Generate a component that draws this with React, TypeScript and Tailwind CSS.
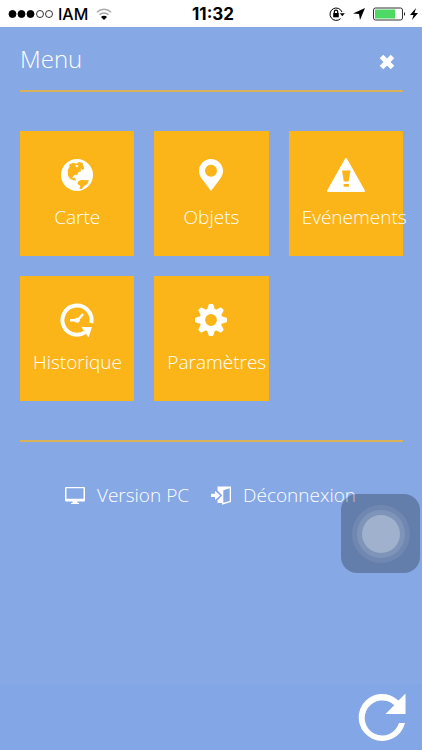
import { ReactNode } from "react";

interface Tile {
  label: string;
  icon: ReactNode;
}

const GlobeIcon = () => (
  <svg viewBox="0 0 96 96" className="size-8">
    <circle cx="48" cy="48" r="48" fill="#fff" />
    <g fill="#fbb518">
      <path d="M20 34 L26 22 L24 17 L36 11 L46 14 L54 9 L66 12 L65 18 L70 28 L66 33 L58 28 L61 36 L52 40 L49 48 L42 47 L38 50 L33 58 L41 56 L46 65 L38 64 L28 60 L21 50 Z" />
      <path d="M50 68 L60 63 L84 64 L78 76 L70 80 L62 90 L55 89 L58 81 L50 75 Z" />
    </g>
    <path d="M44 17 L53 20 L49 25 L43 22 Z" fill="#fff" />
  </svg>
);

const PinIcon = () => (
  <svg viewBox="0 0 24 32" className="h-8 w-6">
    <path
      fill="#fff"
      fillRule="evenodd"
      d="M12 0C5.4 0 0 5.2 0 11.8c0 3 1.2 5.6 2.8 8L12 32l9.200-12.200c1.600-2.400 2.800-5 2.800-8C24 5.200 18.600 0 12 0zm0 5.800a6 6 0 1 1 0 12 6 6 0 0 1 0-12z"
    />
  </svg>
);

const WarningIcon = () => (
  <svg viewBox="0 0 40 34" className="h-[34px] w-10">
    <path d="M20 1 L38 33 H2 Z" fill="#fff" stroke="#fff" strokeWidth="2" strokeLinejoin="round" />
    <path d="M16 12.500h8.500l-1.800 10.500q-2.500 1.500-5 0z" fill="#fbb518" />
    <rect x="17.500" y="26" width="5.500" height="2.800" rx="0.800" fill="#fbb518" />
  </svg>
);

const HistoryIcon = () => (
  <svg viewBox="0 0 34 34" className="size-[34px]">
    <path d="M31.300 20A14.600 14.600 0 1 0 25 29.300" fill="none" stroke="#fff" strokeWidth="4" />
    <path d="M21.500 24 L32 24 L28.500 34.500 Z" fill="#fff" />
    <path d="M10 17.300h7.500l5.500-6.300" fill="none" stroke="#fff" strokeWidth="2.500" />
    <circle cx="17.200" cy="17.300" r="2.500" fill="#fff" />
  </svg>
);

const GearIcon = () => (
  <svg viewBox="-16 -16 32 32" className="size-8">
    <circle r="8.700" fill="none" stroke="#fff" strokeWidth="5.600" />
    {[0, 45, 90, 135, 180, 225, 270, 315].map((angle) => (
      <path
        key={angle}
        d="M-3.800-10.500 L-2.500-15 Q-2.200-16 -1.300-16 H1.300 Q2.200-16 2.500-15 L3.800-10.500 Z"
        fill="#fff"
        transform={`rotate(${angle})`}
      />
    ))}
  </svg>
);

const ScreenIcon = () => (
  <svg viewBox="0 0 20 17" className="h-[17px] w-5" fill="#fff">
    <path
      fillRule="evenodd"
      d="M1 0h18a1 1 0 0 1 1 1v12.500a1 1 0 0 1-1 1h-6.500V16H14v1H6v-1h1.500v-1.500H1a1 1 0 0 1-1-1V1a1 1 0 0 1 1-1zm.500 1.200v10.500h17V1.200z"
    />
  </svg>
);

const LogoutIcon = () => (
  <svg viewBox="0 0 20 19" className="h-[19px] w-5" fill="#fff">
    <path d="M0 7.800h4V4.800L9.200 9.400 4 14v-3H0z" />
    <path d="M6.500 0.500H20V16L11 18.700V17H6.500V14.200L11.300 9.400L6.500 4.600Z" />
    <path d="M12.300 4.300L18.700 2.300V14.900L12.300 16.800Z" fill="#86a8e5" />
  </svg>
);

const CloseIcon = () => (
  <svg viewBox="0 0 16 16" className="size-4">
    <path d="M2.500 2.500 L13.500 13.500 M13.500 2.500 L2.500 13.500" stroke="#fff" strokeWidth="5" />
  </svg>
);

const RefreshIcon = () => (
  <svg viewBox="0 0 48 48" className="size-12">
    <path
      d="M47 30 A23.500 23.500 0 1 1 40.500 7.500 L47.500 0.500 V21 H27.500 L36.200 12.200 A17.500 17.500 0 1 0 41 30 Z"
      fill="#fff"
    />
  </svg>
);

const WifiIcon = () => (
  <svg viewBox="0 0 16 12" className="h-3 w-4" fill="none">
    <path d="M1 4.200a10 10 0 0 1 14 0" stroke="#aaa" strokeWidth="1.500" />
    <path d="M3.400 6.800a6.500 6.500 0 0 1 9.200 0" stroke="#aaa" strokeWidth="1.500" />
    <path d="M8 12 L5 9a4.200 4.200 0 0 1 6 0z" fill="#000" />
  </svg>
);

const LockIcon = () => (
  <svg viewBox="0 0 16 14" className="h-[14px] w-4" fill="none" stroke="#000">
    <path d="M13 5A6.200 6.200 0 1 0 11.500 11.700" />
    <path d="M10.800 6.300h5l-2.500 3z" fill="#000" stroke="none" />
    <rect x="4.200" y="6" width="5.600" height="4.300" fill="#000" stroke="none" />
    <path d="M5.300 6V4.800a1.700 1.700 0 0 1 3.400 0V6" strokeWidth="1.200" />
  </svg>
);

const StatusBar = () => (
  <div className="grid h-[27px] grid-cols-3 items-center bg-white pr-1 pl-2 font-[Inter,sans-serif] text-base text-black">
    <div className="flex items-center">
      <svg viewBox="0 0 46 10" className="mr-1 h-[10px] w-[46px]" stroke="#000">
        <circle cx="4.500" cy="5" r="3.500" />
        <circle cx="13.500" cy="5" r="3.500" />
        <circle cx="22.500" cy="5" r="3.500" />
        <circle cx="32" cy="5" r="3.500" fill="none" strokeWidth="0.800" />
        <circle cx="41" cy="5" r="3.500" fill="none" strokeWidth="0.800" />
      </svg>
      <span className="mr-2 font-medium">IAM</span>
      <WifiIcon />
    </div>
    <span className="pt-px text-center text-[17px] leading-[27px] font-bold">11:32</span>
    <div className="flex items-center justify-end">
      <LockIcon />
      <svg viewBox="0 0 12 12" className="ml-2 size-3">
        <path d="M12 0 L7 12 L6 6 L0 5.500 Z" />
      </svg>
      <svg viewBox="0 0 33 14" className="ml-2 h-[14px] w-[33px]">
        <rect x="0.500" y="1" width="29" height="12" rx="2" fill="#fff" stroke="#333" />
        <rect x="2" y="2.500" width="20" height="9" fill="#4cd964" />
        <path d="M31 5q2 2 0 4z" />
      </svg>
      <svg viewBox="0 0 8 12" className="ml-1 h-3 w-2">
        <path d="M6 0 L0 7 H3.500 L2 12 L8 5 H4.500 Z" />
      </svg>
    </div>
  </div>
);

const tiles: Tile[] = [
  { label: "Carte", icon: <GlobeIcon /> },
  { label: "Objets", icon: <PinIcon /> },
  { label: "Evénements", icon: <WarningIcon /> },
  { label: "Historique", icon: <HistoryIcon /> },
  { label: "Paramètres", icon: <GearIcon /> },
];

const App = () => {
  return (
    <div className="relative flex min-h-screen flex-col bg-[#86a8e5] font-['Open_Sans','Noto_Sans',sans-serif] font-light text-white">
      <StatusBar />
      <main className="grow pr-[19px] pl-5">
        <header className="flex h-[65px] items-center justify-between border-b-2 border-[#d9b25c] pr-2">
          <h1 className="text-2xl">Menu</h1>
          <button type="button" aria-label="Fermer" className="pt-[6px]">
            <CloseIcon />
          </button>
        </header>
        <nav className="grid grid-cols-3 gap-5 border-b-2 border-[#d9b25c] py-[39px]">
          {tiles.map((tile) => (
            <button
              key={tile.label}
              type="button"
              className="flex h-[125px] min-w-0 flex-col bg-[#fbb518] px-[13px] pt-6"
            >
              <span className="flex h-10 w-full items-center justify-center">{tile.icon}</span>
              <span className="mt-2 w-full text-[19px] leading-[28px] whitespace-nowrap">{tile.label}</span>
            </button>
          ))}
        </nav>
        <div className="flex justify-center gap-[22px] pt-10 pr-0.5 text-[19px] leading-[26px]">
          <a href="#pc" className="flex items-center gap-3">
            <ScreenIcon />
            Version PC
          </a>
          <a href="#logout" className="flex items-center gap-3">
            <LogoutIcon />
            Déconnexion
          </a>
        </div>
      </main>
      <footer className="flex h-[66px] items-center justify-end bg-[#82a6e6] pr-4">
        <button type="button" aria-label="Actualiser">
          <RefreshIcon />
        </button>
      </footer>
      {/* floating touch button */}
      <button
        type="button"
        aria-label="AssistiveTouch"
        className="absolute top-[494px] right-[2px] flex size-[79px] items-center justify-center rounded-2xl bg-black/25"
      >
        <span className="flex size-[58px] items-center justify-center rounded-full bg-white/8">
          <span className="flex size-12 items-center justify-center rounded-full bg-white/10">
            <span className="size-[38px] rounded-full bg-[#a0b1cd]" />
          </span>
        </span>
      </button>
    </div>
  );
};

export default App;
